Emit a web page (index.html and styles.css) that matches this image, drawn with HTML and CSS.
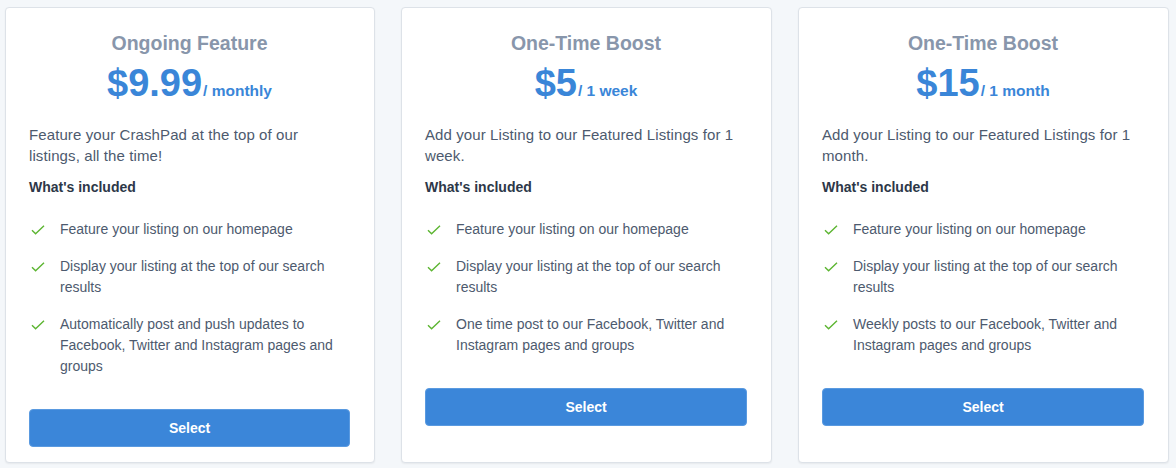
FILE: index.html
```html
<!DOCTYPE html>
<html lang="en">
<head>
  <meta charset="UTF-8" />
  <meta name="viewport" content="width=device-width, initial-scale=1.0" />
  <title>Feature your CrashPad</title>
  <link rel="stylesheet" href="styles.css">
</head>
<body>

  <div class="plans">

    <!-- Ongoing plan -->
    <div class="plan">
      <h2 class="plan-name">Ongoing Feature</h2>
      <div class="plan-price">$9.99<span class="period">/ monthly</span></div>
      <p class="plan-desc">Feature your CrashPad at the top of our listings, all the time!</p>
      <div class="included">What's included</div>
      <ul class="features">
        <li><svg class="check" viewBox="0 0 14 10"><path d="M1 5.2 L4.6 8.8 L13 0.8" /></svg><span>Feature your listing on our homepage</span></li>
        <li><svg class="check" viewBox="0 0 14 10"><path d="M1 5.2 L4.6 8.8 L13 0.8" /></svg><span>Display your listing at the top of our search results</span></li>
        <li><svg class="check" viewBox="0 0 14 10"><path d="M1 5.2 L4.6 8.8 L13 0.8" /></svg><span>Automatically post and push updates to Facebook, Twitter and Instagram pages and groups</span></li>
      </ul>
      <button class="select-btn">Select</button>
    </div>

    <!-- One week boost -->
    <div class="plan">
      <h2 class="plan-name">One-Time Boost</h2>
      <div class="plan-price">$5<span class="period">/ 1 week</span></div>
      <p class="plan-desc">Add your Listing to our Featured Listings for 1 week.</p>
      <div class="included">What's included</div>
      <ul class="features">
        <li><svg class="check" viewBox="0 0 14 10"><path d="M1 5.2 L4.6 8.8 L13 0.8" /></svg><span>Feature your listing on our homepage</span></li>
        <li><svg class="check" viewBox="0 0 14 10"><path d="M1 5.2 L4.6 8.8 L13 0.8" /></svg><span>Display your listing at the top of our search results</span></li>
        <li><svg class="check" viewBox="0 0 14 10"><path d="M1 5.2 L4.6 8.8 L13 0.8" /></svg><span>One time post to our Facebook, Twitter and Instagram pages and groups</span></li>
      </ul>
      <button class="select-btn">Select</button>
    </div>

    <!-- One month boost -->
    <div class="plan">
      <h2 class="plan-name">One-Time Boost</h2>
      <div class="plan-price">$15<span class="period">/ 1 month</span></div>
      <p class="plan-desc">Add your Listing to our Featured Listings for 1 month.</p>
      <div class="included">What's included</div>
      <ul class="features">
        <li><svg class="check" viewBox="0 0 14 10"><path d="M1 5.2 L4.6 8.8 L13 0.8" /></svg><span>Feature your listing on our homepage</span></li>
        <li><svg class="check" viewBox="0 0 14 10"><path d="M1 5.2 L4.6 8.8 L13 0.8" /></svg><span>Display your listing at the top of our search results</span></li>
        <li><svg class="check" viewBox="0 0 14 10"><path d="M1 5.2 L4.6 8.8 L13 0.8" /></svg><span>Weekly posts to our Facebook, Twitter and Instagram pages and groups</span></li>
      </ul>
      <button class="select-btn">Select</button>
    </div>

  </div>

</body>
</html>
```

FILE: styles.css
```css
body {
  margin: 0;
  background: #f4f7fa;
  font-family: 'Liberation Sans', Arial, sans-serif;
  color: #4a5568;
}

.plans {
  display: grid;
  grid-template-columns: 370px 371px 371px;
  column-gap: 26px;
  padding: 7px 7px 5px 5px;
}

.plan {
  background: #fff;
  border: 1px solid #dde2e8;
  border-radius: 4px;
  box-shadow: 0 1px 2px rgba(0, 0, 0, 0.06);
  padding: 24px 24px 16px 23px;
  height: 456px;
  box-sizing: border-box;
}

.plan-name {
  margin: 0;
  text-align: center;
  font-size: 19.5px;
  line-height: 23px;
  font-weight: bold;
  color: #8896ab;
}

.plan-price {
  margin-top: 9px;
  text-align: center;
  font-size: 38px;
  line-height: 38px;
  font-weight: bold;
  color: #3a86d8;
}

.period {
  font-size: 15.5px;
  margin-left: 1px;
}

.plan-desc {
  margin: 14px 0 0;
  font-size: 15px;
  line-height: 21px;
  letter-spacing: 0.1px;
  color: #4d5a6e;
}

.included {
  margin-top: 11px;
  font-size: 14px;
  line-height: 21px;
  font-weight: bold;
  color: #2d3748;
}

.features {
  list-style: none;
  margin: 21px 0 0;
  padding: 0;
  display: flex;
  flex-direction: column;
  gap: 16px;
}

.features li {
  display: flex;
  align-items: flex-start;
  font-size: 14px;
  line-height: 21px;
  color: #4d5a6e;
}

.check {
  flex: none;
  width: 14px;
  height: 10px;
  margin: 6px 15px 0 2px;
  fill: none;
  stroke: #5cb531;
  stroke-width: 1.4;
}

.select-btn {
  display: block;
  width: 100%;
  height: 38px;
  margin-top: 32px;
  background: #3b86d9;
  border: 1px solid #5a9ae0;
  border-radius: 4px;
  color: #fff;
  font-family: inherit;
  font-size: 14px;
  font-weight: bold;
  cursor: pointer;
}
```
